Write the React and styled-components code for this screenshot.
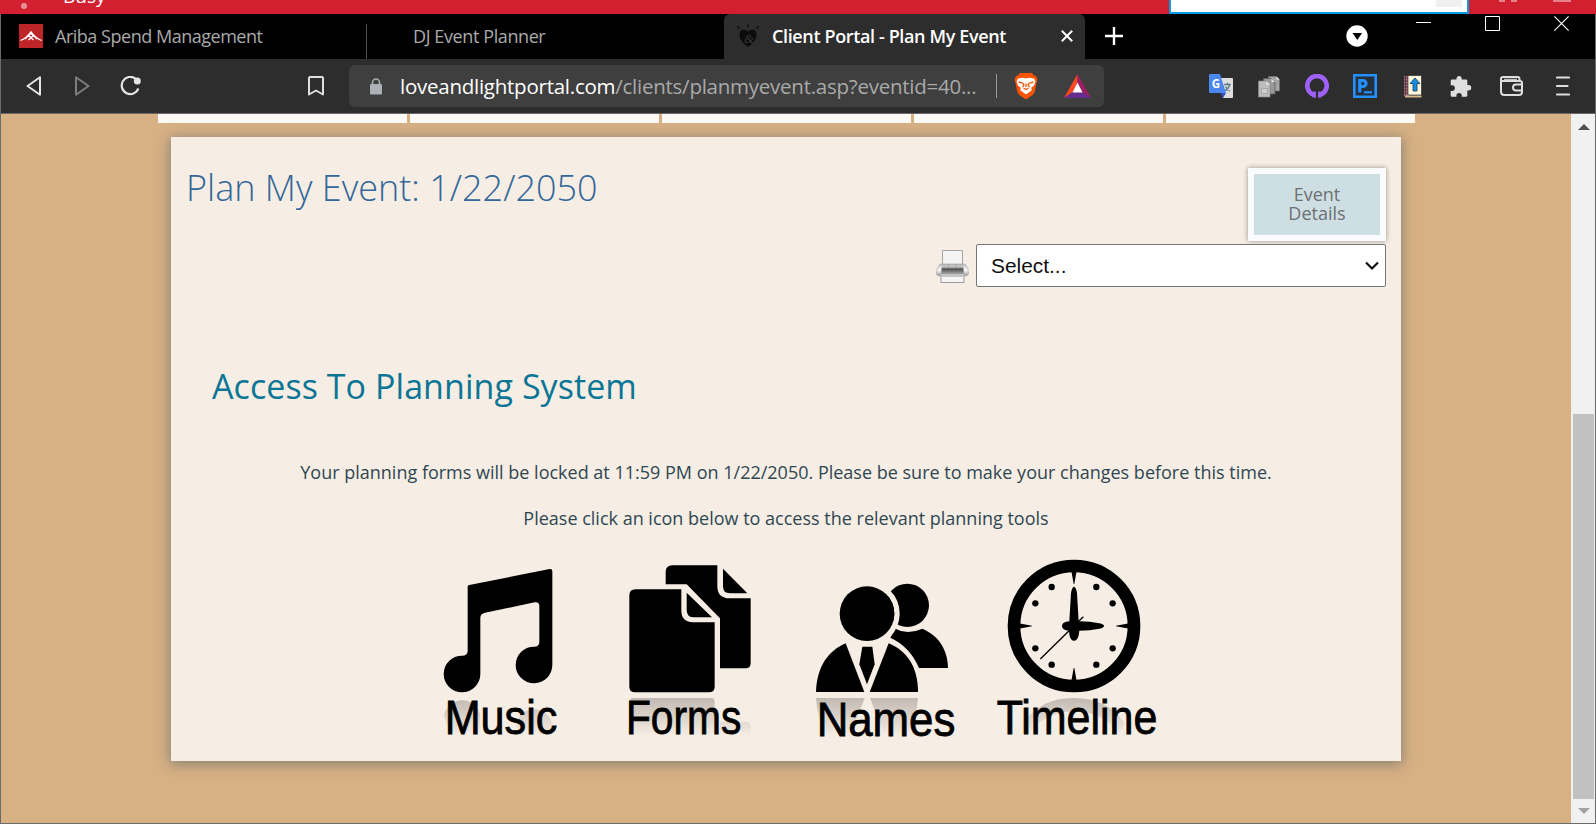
import React from "react";
import styled, { createGlobalStyle } from "styled-components";

const GlobalStyle = createGlobalStyle`
  * { box-sizing: border-box; }
  html, body { margin: 0; padding: 0; overflow: hidden; }
  body { background: #000; font-family: "Open Sans", "Noto Sans", sans-serif; }
  h1, h2, p { margin: 0; font-weight: 400; }
  svg { display: block; flex: none; }
`;

const Screen = styled.div`
  width: 1596px;
  height: 824px;
  display: flex;
  flex-direction: column;
  overflow: hidden;
`;

const BackStrip = styled.div`
  height: 14px;
  flex: none;
  display: flex;
  align-items: flex-start;
  background: #d32030;
  overflow: hidden;
`;

const StatusDot = styled.span`
  width: 6px;
  height: 6px;
  margin: 3px 36px 0 21px;
  border-radius: 50%;
  background: #ec8e95;
`;

const StatusText = styled.span`
  width: 1106px;
  margin-top: -17px;
  color: #fff;
  font-size: 19px;
  line-height: 26px;
`;

const BackSearch = styled.div`
  width: 300px;
  height: 14px;
  display: flex;
  justify-content: flex-end;
  padding-right: 5px;
  background: #fff;
  border: solid #0a9be0;
  border-width: 0 2px 2px;
  margin-right: 30px;
`;

const SearchKnob = styled.span`
  width: 26px;
  height: 7px;
  background: #f0f0f0;
`;

const BackMark = styled.span`
  width: ${(p) => p.$w}px;
  height: 2px;
  margin-right: ${(p) => p.$gap}px;
  background: #e6808a;
`;

const Browser = styled.div`
  flex: 1;
  display: flex;
  flex-direction: column;
  border: 1px solid #6b6b6b;
  border-top: 0;
  min-height: 0;
`;

const TabStrip = styled.div`
  height: 45px;
  flex: none;
  display: flex;
  background: #000;
`;

const Tab = styled.div`
  width: ${(p) => p.$width}px;
  flex: none;
  display: flex;
  align-items: center;
  padding: 0 12px 1px ${(p) => p.$pad}px;
  gap: 12px;
  border-radius: 6px 6px 0 0;
  background: ${(p) => (p.$active ? "#2d2d2d" : "transparent")};
`;

const TabLabel = styled.span`
  flex: 1;
  white-space: nowrap;
  font-size: 18px;
  margin-top: -1px;
  font-weight: ${(p) => (p.$active ? 600 : 400)};
  letter-spacing: ${(p) => p.$spacing}px;
  color: ${(p) => (p.$active ? "#fff" : "#a9a9a9")};
`;

const TabDivider = styled.span`
  width: 1px;
  flex: none;
  height: 35px;
  margin-top: 10px;
  background: #505050;
`;

const NewTab = styled.div`
  width: 261px;
  flex: none;
  padding: 13px 0 0 20px;
`;

const WindowControls = styled.div`
  display: flex;
  flex: none;
  margin-left: 21px;
`;

const ControlCell = styled.div`
  width: 69px;
  display: flex;
  justify-content: center;
  padding-top: 1px;
`;

const Toolbar = styled.div`
  height: 55px;
  flex: none;
  display: flex;
  align-items: center;
  background: #2d2d2d;
  border-bottom: 1px solid #6a6868;
`;

const NavButtons = styled.div`
  display: flex;
  width: 291px;
  padding-left: 9px;
`;

const IconCell = styled.div`
  width: ${(p) => p.$w || 48}px;
  flex: none;
  display: flex;
  justify-content: center;
  align-items: center;
`;

const AddressBar = styled.div`
  width: 755px;
  height: 42px;
  margin-left: 9px;
  display: flex;
  align-items: center;
  padding-left: 20px;
  border-radius: 6px;
  background: #3f3f3f;
`;

const Url = styled.span`
  width: 596px;
  flex: none;
  margin-left: 17px;
  white-space: nowrap;
  font-size: 20.5px;
  letter-spacing: -0.25px;
  color: #a9a9a9;
`;

const Host = styled.span`
  color: #fff;
`;

const UrlDivider = styled.span`
  width: 1px;
  flex: none;
  height: 24px;
  margin-right: 17px;
  background: #9a9a9a;
`;

const Extensions = styled.div`
  display: flex;
  margin-left: 93px;
`;

const Viewport = styled.div`
  flex: 1;
  display: flex;
  min-height: 0;
  background: #d7b084;
`;

const Page = styled.main`
  width: 1570px;
`;

const NavTiles = styled.nav`
  display: flex;
  gap: 3px;
  margin-left: 157px;
`;

const NavTile = styled.div`
  width: 249px;
  height: 9px;
  background: #fcf8f3;
`;

const Panel = styled.section`
  width: 1230px;
  height: 624px;
  margin: 14px 0 0 170px;
  background: #f6eee4;
  box-shadow: 0 2px 12px 1px rgba(85, 100, 105, 0.62);
`;

const PanelHeader = styled.header`
  display: flex;
  justify-content: space-between;
  height: 107px;
  padding: 24px 15px 0 15px;
`;

const Title = styled.h1`
  padding-top: 2px;
  font-size: 36px;
  line-height: 50px;
  font-weight: 300;
  color: #336699;
`;

const DetailsButton = styled.button`
  width: 138px;
  height: 73px;
  margin-top: 7px;
  padding: 0 30px 2px;
  border: 6px solid #fafbfd;
  background: #cedfe3;
  box-shadow: 0 0 5px rgba(0, 0, 0, 0.4);
  color: #6d7072;
  font: 400 18px/19px "Open Sans", sans-serif;
`;

const PrintRow = styled.div`
  display: flex;
  align-items: center;
  justify-content: flex-end;
  gap: 7px;
  padding-right: 15px;
  height: 43px;
`;

const SelectBox = styled.div`
  width: 410px;
  height: 43px;
  display: flex;
  align-items: center;
  justify-content: space-between;
  padding: 1px 6px 0 14px;
  border: 1px solid #767676;
  border-radius: 2px;
  background: #fff;
  color: #111;
  font: 20.9px "Liberation Sans", sans-serif;
`;

const SectionTitle = styled.h2`
  margin: 77px 0 0 41px;
  font-size: 34px;
  line-height: 44px;
  letter-spacing: 0.06px;
  color: #0b7596;
`;

const Note = styled.p`
  margin-top: ${(p) => p.$top}px;
  text-align: center;
  font-size: 18px;
  line-height: 24px;
  font-weight: 400;
  color: #2f4652;
`;

const Tools = styled.div`
  display: flex;
  padding-left: 265px;
  margin-top: 25px;
`;

const ToolSvg = styled.svg`
  font-family: "Liberation Sans", Arial, sans-serif;
  font-size: 143px;
`;

const Scrollbar = styled.aside`
  width: 24px;
  display: flex;
  flex-direction: column;
  align-items: center;
  justify-content: space-between;
  padding: 10px 1px 9px 2px;
  background: #f1f1f1;
`;

const Thumb = styled.div`
  width: 21px;
  height: 385px;
  margin: 284px 0 9px;
  background: #c1c1c1;
`;

function Tool({ x, width, ox, label, labelX, labelW, labelY = 553, reflection, children }) {
  const id = `fade-${label}`;
  return (
    <ToolSvg width={width} height={196} viewBox={`${x} 555 ${width} 196`}>
      <defs>
        <linearGradient id={id} gradientUnits="userSpaceOnUse" x1="0" y1="440" x2="0" y2="558">
          <stop offset="0" stopColor="#5c5450" stopOpacity="0.35" />
          <stop offset="1" stopColor="#5c5450" stopOpacity="0" />
        </linearGradient>
      </defs>
      <g transform={`translate(${ox} 550) scale(0.33333)`}>
        <g fill={`url(#${id})`}>{reflection}</g>
        {children}
        <text x={labelX} y={labelY} textLength={labelW} lengthAdjust="spacingAndGlyphs" stroke="#000" strokeWidth="2.500">
          {label}
        </text>
      </g>
    </ToolSvg>
  );
}

const MusicTool = () => (
  <Tool x={436} width={180} ox={430} label="Music" labelX={44} labelW={338}
    reflection={<><path d="M42 498a55 55 0 0 1 109 0v50H62z" /><path d="M258 525a55 55 0 0 1 109 0v30H262z" /></>}>
    <path d="M113 110Q113 106 118 105L359 57Q367 56 367 64V344A55 55 0 1 1 312 290Q328 290 328 276V168Q328 155 314 157L165 188Q151 191 151 204V372A55 55 0 1 1 96 317Q113 317 113 303Z" />
  </Tool>
);

const FormsTool = () => (
  <Tool x={616} width={190} ox={430} label="Forms" labelX={588} labelW={346}
    reflection={<><path d="M598 456q0-12 12-12h232q12 0 12 12v102H598z" /><path d="M870 516h78q14 0 14 14v28h-92z" /></>}>
    <path d="M727 46H862V108Q862 145 899 145H962V340Q962 355 947 355H870V205L770 103H707V66Q707 46 727 46Z" />
    <path d="M879 56L952 130H900Q879 130 879 109Z" />
    <path d="M617 118H754V181Q754 217 790 217H854V410Q854 427 837 427H615Q598 427 598 410V137Q598 118 617 118Z" />
    <path d="M770 128L846 202H793Q770 202 770 180Z" />
  </Tool>
);

const NamesTool = () => (
  <Tool x={806} width={180} ox={790} label="Names" labelX={80} labelW={416} labelY={558}
    reflection={<><path d="M78 444h146l-44 114H110Q80 500 78 444z" /><path d="M240 444h144q-2 56-34 114h-66z" /></>}>
    <path d="M316 236Q352 256 397 236C450 258 474 305 474 354H387Q360 290 301 263Z" />
    <circle cx="352" cy="166" r="65" />
    <circle cx="231" cy="191" r="90" fill="none" stroke="#f6eee4" strokeWidth="16" />
    <circle cx="231" cy="191" r="82" />
    <path d="M167 280L223 426H78C80 350 115 302 167 280Z" />
    <path d="M296 280C350 302 384 350 384 426H239Z" />
    <path d="M217 290H247L254 343L231 403L208 343Z" />
  </Tool>
);

const TimelineTool = () => (
  <Tool x={986} width={210} ox={790} label="Timeline" labelX={620} labelW={482}
    reflection={<path d="M700 520Q750 444 852 444T1004 520L990 556Q940 484 852 484T714 556z" />}>
    <circle cx="852" cy="228" r="180" fill="none" stroke="#000" strokeWidth="38" />
    <path d="M844 62h16l-7 40h-2zM844 394h16l-7-40h-2zM686 220v16l40-7v-2zM1018 220v16l-40-7v-2z" />
    {[[785, 111], [919, 111], [736, 160], [968, 160], [736, 295], [968, 295], [785, 344], [919, 344]].map(([cx, cy]) => (
      <circle key={`${cx}-${cy}`} cx={cx} cy={cy} r="9.5" />
    ))}
    <path d="M751 327L880 200" stroke="#000" strokeWidth="4" />
    <path d="M852 110Q858 110 861 130L866 214Q900 214 928 220Q942 223 942 228Q942 233 928 236Q900 242 868 242Q866 272 852 272Q838 272 837 242Q816 240 816 228Q816 216 838 214L843 130Q846 110 852 110Z" />
  </Tool>
);

const Printer = () => (
  <svg width="33" height="35" viewBox="0 -2 33 35">
    <defs>
      <linearGradient id="printerBody" x1="0" y1="0" x2="0" y2="1">
        <stop offset="0" stopColor="#d2d2d2" />
        <stop offset="0.3" stopColor="#b8b8b8" />
        <stop offset="0.45" stopColor="#4c4c4c" />
        <stop offset="0.75" stopColor="#8a8a8a" />
        <stop offset="1" stopColor="#c8c8c8" />
      </linearGradient>
      <linearGradient id="printerEdge" x1="0" y1="0" x2="0" y2="1">
        <stop offset="0" stopColor="#bdbdbd" />
        <stop offset="0.5" stopColor="#fafafa" />
        <stop offset="1" stopColor="#9b9b9b" />
      </linearGradient>
    </defs>
    <path d="M6.500.500h20V17h-20z" fill="#f4f4f4" stroke="#a4a4a4" />
    <path d="M4 14h25q4 4 3.500 10-.5 2-4 2h-24q-4 0-4-2Q0 18 4 14z" fill="url(#printerEdge)" stroke="#a5a5a5" strokeWidth=".6" />
    <path d="M6 14h21l1 11H5z" fill="url(#printerBody)" />
    <path d="M6 14.500h21M12.500 14v4M20 14v4" stroke="#999" strokeWidth=".6" />
    <path d="M5 23.500h23V32.500H5z" fill="#f5f5f5" stroke="#999" />
    <path d="M5.500 24h22v3h-22z" fill="#c4c4c4" />
  </svg>
);

const AribaLogo = () => (
  <svg width="24" height="24" viewBox="0 0 24 24">
    <path fill="#bd2529" d="M0 0h24v24H0z" />
    <path d="M1.500 16.500Q7 14.500 12 7.800 17 14.500 22.500 16.500M6 15l3.500-3.500 5 4.500M18 15l-3.500-3.500-5 4.500M9.500 11.500L12 9.500l2.500 2-2.500 2z" fill="none" stroke="#fff" strokeWidth="1.300" />
  </svg>
);

const HeartLogo = () => (
  <svg width="24" height="24" viewBox="0 0 24 24" fill="#0c0c0c">
    <path d="M12 7.500Q8 4 5 6.500q-3 4.500 0 9.500 2 3.500 7 7 5-3.500 7-7 3-5 0-9.500-3-2.500-7 1z" />
    <path d="M1.500 2l2 3M12 .5v3M22.500 2l-2 3" stroke="#0c0c0c" strokeWidth="1.300" />
    <text x="8" y="19" fontSize="13" fontFamily="Liberation Serif, serif" fontStyle="italic" fill="#373737">&amp;</text>
  </svg>
);

const BraveLogo = () => (
  <svg width="24" height="28" viewBox="0 0 24 28">
    <path d="M6 1h12l2 2.500 2 .5 1.500 4-.8 2-2 10-2 3L12 27.500 5.300 23l-2-3-2-10-.8-2L2 4l2-.5z" fill="#fb5304" />
    <path d="M4 6.500l5-.7 3 .7 3-.7 5 .7 1.500 3-1.500 4-3 2.500 1 2-6 4.500L6 18l1-2-3-2.500-1.500-4z" fill="#fff" />
    <path d="M4.500 10l4.500 1.200 1 1.800-1.500 2M19.500 10L15 11.200 14 13l1.500 2M12 11.500v3.500M9.500 16l2.500 1.500 2.500-1.500" fill="none" stroke="#fb5304" strokeWidth="1.300" />
  </svg>
);

const BatLogo = () => (
  <svg width="27" height="24" viewBox="0 0 27 24">
    <path d="M13.500 0L0 24l9-6 4.500-9z" fill="#ff4724" />
    <path d="M13.500 0L27 24l-9-6-4.500-9z" fill="#9e1f63" />
    <path d="M0 24h27l-9-6H9z" fill="#662d91" />
    <path d="M13.500 8.500l5 10h-10z" fill="#fff" />
  </svg>
);

const TranslateIcon = () => (
  <svg width="24" height="24" viewBox="0 0 24 24">
    <path d="M9 4h14q1 0 1 1v18q0 1-1 1H14z" fill="#dedede" />
    <path d="M15 10.500h7M18.500 8.500v2M20.500 11q-1 4-5 6M16.500 12.500q1.500 3.500 4.500 4.500" fill="none" stroke="#607d8b" strokeWidth="1.300" />
    <path d="M1 0h10l6 19H1q-1 0-1-1V1q0-1 1-1z" fill="#4a86ee" />
    <path d="M11.500 19H17l-3 5z" fill="#3450c0" />
    <text x="2.700" y="13.700" fontSize="11.500" fontWeight="700" fontFamily="Open Sans, sans-serif" fill="#fff">G</text>
  </svg>
);

const CopiesIcon = () => (
  <svg width="22" height="23" viewBox="0 0 22 23">
    <path d="M10.500 1.500h8l3 3v11.500h-11z" fill="#a5a5a5" stroke="#777" strokeWidth=".5" />
    <path d="M5.500 3.500h8l3.500 3.500v12H5.500z" fill="#999" stroke="#5c5c5c" strokeWidth=".8" />
    <path d="M.5 6H8.500l3.500 3.500v12.500H.5z" fill="#bdbdbd" stroke="#888" strokeWidth=".7" />
    <path d="M8.300 6l3.700 3.700H8.300zM13.500 3.500L17 7h-3.500zM18.500 1.500l3 3h-3z" fill="#e4e4e4" />
    <path d="M3.500 13.500h6v5h-6z" fill="#cfcfcf" stroke="#999" strokeWidth=".7" />
  </svg>
);

const RingIcon = () => (
  <svg width="24" height="24" viewBox="0 0 24 24">
    <path d="M8.600 20.800A9.700 9.700 0 1 1 15.400 20.800" fill="none" stroke="#a061fb" strokeWidth="4.600" />
    <path d="M8.300 17.500h2.600v6.300l-3.600-.6zM15.700 17.500h-2.600v6.300l3.600-.6z" fill="#a061fb" />
  </svg>
);

const PIcon = () => (
  <svg width="24" height="24" viewBox="0 0 24 24">
    <path d="M1.300 1.300h21.400v21.400H1.300z" fill="#25303d" stroke="#2590ff" strokeWidth="2.600" />
    <path d="M6.800 18.500V6.500H10a3 3 0 0 1 0 6H7" fill="none" stroke="#2590ff" strokeWidth="3.200" />
    <path d="M11 18.300h8" stroke="#2590ff" strokeWidth="2.200" />
  </svg>
);

const BookIcon = () => (
  <svg width="18" height="23" viewBox="0 0 18 23">
    <path d="M0 1h5v20H0z" fill="#a96f7d" />
    <path d="M1.500 1v20M0 3h4M0 6h4M0 9h4M0 12h4M0 15h4M0 18h4" stroke="#512f3a" strokeWidth=".8" />
    <path d="M4 .5h13.500V20H4z" fill="#fff5df" stroke="#1c1c1c" strokeWidth=".6" />
    <path d="M1 20.500h16.500v2H1z" fill="#d5b98e" />
    <path d="M11 3l5 5.500h-3V16H9V8.500H6z" fill="#178be0" stroke="#153d60" strokeWidth=".8" />
  </svg>
);

const PuzzleIcon = () => (
  <svg width="22" height="22" viewBox="0 0 22 22" fill="#dedede">
    <path d="M2 4.500h4.500a2.700 2.700 0 1 1 5.200 0H16q1.300 0 1.300 1.300V10h1.200a2.700 2.700 0 0 1 0 5.500h-1.200v5q0 1.300-1.300 1.300h-4.200v-1.200a2.700 2.700 0 0 0-5.400 0v1.200H2Q.7 21.800.7 20.500v-4.500h1.300a2.900 2.900 0 0 0 0-5.800H.7V5.800Q.7 4.500 2 4.500z" />
  </svg>
);

const WalletIcon = () => (
  <svg width="24" height="20" viewBox="0 0 24 20" fill="none" stroke="#dedede" strokeWidth="2">
    <path d="M19.500 5.500V3q0-2-2-2H3Q1 1 1 3v12.500Q1 19 4.500 19H19q3 0 3-3V7q0-2-2-2H1.500" />
    <path d="M4 3.300h13" strokeWidth="1" />
    <path d="M23 8.500h-7a3 3 0 0 0 0 6h7" />
  </svg>
);

export default function App() {
  return (
    <Screen>
      <GlobalStyle />
      <BackStrip>
        <StatusDot />
        <StatusText>Busy</StatusText>
        <BackSearch><SearchKnob /></BackSearch>
        <BackMark $w={6} $gap={6} />
        <BackMark $w={6} $gap={36} />
        <BackMark $w={18} $gap={0} />
      </BackStrip>
      <Browser>
        <TabStrip>
          <Tab $width={365} $pad={18}>
            <AribaLogo />
            <TabLabel $spacing={-0.48}>Ariba Spend Management</TabLabel>
          </Tab>
          <TabDivider />
          <Tab $width={357} $pad={46}>
            <TabLabel $spacing={-0.4}>DJ Event Planner</TabLabel>
          </Tab>
          <Tab $active $width={361} $pad={12}>
            <HeartLogo />
            <TabLabel $active $spacing={-0.37}>Client Portal - Plan My Event</TabLabel>
            <svg width="12" height="12" viewBox="0 0 12 12"><path d="M.8.8l10.400 10.400M11.200.8L.8 11.200" stroke="#fff" strokeWidth="2" /></svg>
          </Tab>
          <NewTab>
            <svg width="18" height="18" viewBox="0 0 18 18"><path d="M9 0v18M0 9h18" stroke="#fff" strokeWidth="2.400" /></svg>
          </NewTab>
          <svg width="22" height="45" viewBox="0 0 22 45">
            <circle cx="11" cy="22" r="10.700" fill="#fff" />
            <path d="M6.500 19h9.500l-4.700 7z" />
          </svg>
          <WindowControls>
            <ControlCell>
              <svg width="15" height="15"><path d="M0 7.500h15" stroke="#fff" /></svg>
            </ControlCell>
            <ControlCell>
              <svg width="15" height="16"><path d="M.5 1.500h14v14H.5z" fill="none" stroke="#fff" /></svg>
            </ControlCell>
            <ControlCell>
              <svg width="15" height="16"><path d="M.4 1.400l14.200 14.200M14.600 1.400L.4 15.600" stroke="#fff" strokeWidth="1.100" /></svg>
            </ControlCell>
          </WindowControls>
        </TabStrip>
        <Toolbar>
          <NavButtons>
            <IconCell><svg width="16" height="20" viewBox="0 0 16 20"><path d="M14 1.200V18.800L1.500 10z" fill="none" stroke="#e4e4e4" strokeWidth="2" strokeLinejoin="round" /></svg></IconCell>
            <IconCell><svg width="16" height="20" viewBox="0 0 16 20"><path d="M2 1.200V18.800L14.500 10z" fill="none" stroke="#7d7d7d" strokeWidth="2" strokeLinejoin="round" /></svg></IconCell>
            <IconCell>
              <svg width="21" height="20" viewBox="0 0 21 20">
                <path d="M15.500 2.600A8.600 8.600 0 1 0 18.400 12.500" fill="none" stroke="#e4e4e4" strokeWidth="2.200" />
                <circle cx="17.300" cy="5" r="3.500" fill="#e4e4e4" />
              </svg>
            </IconCell>
          </NavButtons>
          <IconCell>
            <svg width="16" height="20" viewBox="0 0 16 20"><path d="M1 2q0-1 1-1h12q1 0 1 1v16.500L8 14.500 1 18.500z" fill="none" stroke="#dedede" strokeWidth="2" strokeLinejoin="round" /></svg>
          </IconCell>
          <AddressBar>
            <svg width="14" height="17" viewBox="0 0 14 17">
              <rect x="1" y="6" width="12" height="10.500" rx="1.200" fill="#aeb0b8" />
              <path d="M3.500 6V4.500a3.500 3.500 0 0 1 7 0V6" fill="none" stroke="#aeb0b8" strokeWidth="1.500" />
            </svg>
            <Url><Host>loveandlightportal.com</Host>/clients/planmyevent.asp?eventid=40...</Url>
            <UrlDivider />
            <BraveLogo />
            <IconCell $w={78}><BatLogo /></IconCell>
          </AddressBar>
          <Extensions>
            <IconCell><TranslateIcon /></IconCell>
            <IconCell><CopiesIcon /></IconCell>
            <IconCell><RingIcon /></IconCell>
            <IconCell><PIcon /></IconCell>
            <IconCell><BookIcon /></IconCell>
            <IconCell><PuzzleIcon /></IconCell>
            <IconCell $w={54}><WalletIcon /></IconCell>
            <IconCell $w={48}>
              <svg width="14" height="20" viewBox="0 0 14 20"><path d="M1 1.500h12M1 10h10.500M1 18.500h12" stroke="#dedede" strokeWidth="2.200" strokeLinecap="round" /></svg>
            </IconCell>
          </Extensions>
        </Toolbar>
        <Viewport>
          <Page>
            <NavTiles>
              <NavTile /><NavTile /><NavTile /><NavTile /><NavTile />
            </NavTiles>
            <Panel>
              <PanelHeader>
                <Title>Plan My Event: 1/22/2050</Title>
                <DetailsButton>Event Details</DetailsButton>
              </PanelHeader>
              <PrintRow>
                <Printer />
                <SelectBox>
                  Select...
                  <svg width="14" height="10" viewBox="0 0 14 10"><path d="M1 1.500l6 6 6-6" fill="none" stroke="#111" strokeWidth="2.200" /></svg>
                </SelectBox>
              </PrintRow>
              <SectionTitle>Access To Planning System</SectionTitle>
              <Note $top={52}>Your planning forms will be locked at 11:59 PM on 1/22/2050. Please be sure to make your changes before this time.</Note>
              <Note $top={22}>Please click an icon below to access the relevant planning tools</Note>
              <Tools>
                <MusicTool />
                <FormsTool />
                <NamesTool />
                <TimelineTool />
              </Tools>
            </Panel>
          </Page>
          <Scrollbar>
            <svg width="12" height="6"><path d="M6 0l6 6H0z" fill="#505050" /></svg>
            <Thumb />
            <svg width="12" height="6"><path d="M0 0h12L6 6z" fill="#a3a3a3" /></svg>
          </Scrollbar>
        </Viewport>
      </Browser>
    </Screen>
  );
}
